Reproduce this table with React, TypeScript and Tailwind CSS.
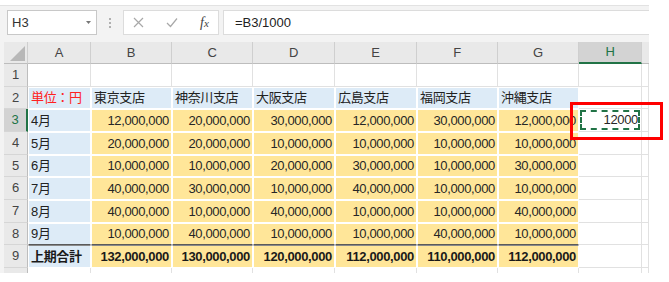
import React from "react";

const rows: [string, string[]][] = [
  ["4月", ["12,000,000", "20,000,000", "30,000,000", "12,000,000", "30,000,000", "12,000,000"]],
  ["5月", ["20,000,000", "20,000,000", "10,000,000", "10,000,000", "10,000,000", "10,000,000"]],
  ["6月", ["10,000,000", "10,000,000", "20,000,000", "30,000,000", "10,000,000", "30,000,000"]],
  ["7月", ["40,000,000", "30,000,000", "10,000,000", "40,000,000", "10,000,000", "10,000,000"]],
  ["8月", ["40,000,000", "10,000,000", "40,000,000", "10,000,000", "10,000,000", "40,000,000"]],
  ["9月", ["10,000,000", "40,000,000", "10,000,000", "10,000,000", "40,000,000", "10,000,000"]],
];
const totals = ["132,000,000", "130,000,000", "120,000,000", "112,000,000", "110,000,000", "112,000,000"];
const stores = ["東京支店", "神奈川支店", "大阪支店", "広島支店", "福岡支店", "沖縄支店"];
const letters = ["A", "B", "C", "D", "E", "F", "G"];

const empty = "bg-white border-b border-r border-[#e1e1e1]";
const emptyLast = "bg-white border-r border-[#e1e1e1]";
const rowHead =
  "flex items-center justify-center bg-[#e9e9e9] border-b border-r border-b-[#d6d6d6] border-r-[#bdbdbd] text-[#444] text-[13px]";

export default function App() {
  return (
    <div className="w-[669px] h-[282px] bg-white overflow-hidden relative font-['Liberation_Sans','Noto_Sans_CJK_JP',sans-serif] text-[13px] tracking-[-0.35px]">
      <div className="w-[649px] mt-[5px] bg-[#f3f3f3] border-t border-[#e2e2e2]">
        {/* formula bar */}
        <div className="h-[36px] pt-[4px] pl-[7px] flex items-start">
          <div className="w-[90px] h-[25px] bg-white border border-[#c8c8c8] flex items-center justify-between pl-[4px] pr-[5px]">
            <span className="text-[#333] tracking-normal">H3</span>
            <svg width="5" height="3" viewBox="0 0 5 3">
              <path d="M0 0H5L2.5 3Z" fill="#777" />
            </svg>
          </div>
          <div className="w-[26px] h-[25px] flex items-center justify-center">
            <div className="flex flex-col gap-[2px]">
              <div className="w-[2px] h-[2px] bg-[#b0b0b0]" />
              <div className="w-[2px] h-[2px] bg-[#b0b0b0]" />
              <div className="w-[2px] h-[2px] bg-[#b0b0b0]" />
            </div>
          </div>
          <div className="w-[96px] h-[25px] bg-white border border-[#dcdcdc] flex items-center pl-[9px] gap-[22px]">
            <svg width="11" height="11" viewBox="0 0 11 11">
              <path d="M1 1L10 10M10 1L1 10" stroke="#a8a8a8" strokeWidth="1.2" />
            </svg>
            <svg width="12" height="11" viewBox="0 0 12 11">
              <path d="M1 6L4.5 9.5L11 1.5" stroke="#a8a8a8" strokeWidth="1.2" fill="none" />
            </svg>
            <span className="italic font-['Liberation_Serif',serif] text-[14px] text-[#444] tracking-normal leading-none">
              f<span className="text-[11px]">x</span>
            </span>
          </div>
          <div className="ml-[4px] flex-1 h-[25px] bg-white border border-[#dcdcdc] border-r-0 flex items-center pl-[11px] text-[#222] tracking-normal">
            =B3/1000
          </div>
        </div>

        {/* sheet */}
        <div className="pl-[4px] grid grid-cols-[24px_63px_81px_81px_82px_82px_81px_81px_63px_7px] grid-rows-[22px_23px_22px_23px_23px_22px_23px_23px_22px_23px_5px]">
          {/* header row */}
          <div className="flex items-end justify-end pr-[2px] pb-[2px] bg-[#e9e9e9] border-b border-r border-b-[#bdbdbd] border-r-[#cfcfcf]">
            <svg width="15" height="15" viewBox="0 0 15 15">
              <polygon points="15,0 15,15 0,15" fill="#b8b8b8" />
            </svg>
          </div>
          {letters.map((l) => (
            <div
              key={l}
              className="flex items-center justify-center bg-[#e9e9e9] border-b border-r border-b-[#bdbdbd] border-r-[#cfcfcf] text-[#444]"
            >
              {l}
            </div>
          ))}
          <div className="flex items-center justify-center bg-[#d3d3d3] border-b-2 border-r border-b-[#217346] border-r-[#cfcfcf] text-[#217346]">
            H
          </div>
          <div className="bg-[#e9e9e9] border-b border-b-[#bdbdbd]" />

          {/* row 1 */}
          <div className={rowHead}>1</div>
          {Array.from({ length: 9 }).map((_, i) => (
            <div key={i} className={empty} />
          ))}

          {/* row 2 */}
          <div className={rowHead}>2</div>
          <div className="bg-[#ddebf7] border border-white flex items-center pl-[2px] text-[#ff2020] whitespace-nowrap">
            単位：円
          </div>
          {stores.map((s) => (
            <div
              key={s}
              className="bg-[#ddebf7] border border-white flex items-center pl-[2px] text-[#222] whitespace-nowrap"
            >
              {s}
            </div>
          ))}
          <div className={empty} />
          <div className={empty} />

          {/* rows 3-8 */}
          {rows.map(([m, vals], ri) => {
            const last = ri === rows.length - 1;
            const dark = last ? " border-b-[#5a5a5a]" : "";
            return (
              <React.Fragment key={m}>
                {ri === 0 ? (
                  <div className="flex items-center justify-center bg-[#d3d3d3] border-b border-r-2 border-b-[#d6d6d6] border-r-[#217346] text-[#217346]">
                    3
                  </div>
                ) : (
                  <div className={rowHead}>{ri + 3}</div>
                )}
                <div className={"bg-[#ddebf7] border border-white flex items-center pl-[2px] text-[#222] whitespace-nowrap" + dark}>
                  {m}
                </div>
                {vals.map((v, ci) => (
                  <div
                    key={ci}
                    className={"bg-[#ffe699] border border-white flex items-center justify-end pr-[2px] text-[#262626] whitespace-nowrap" + dark}
                  >
                    {v}
                  </div>
                ))}
                {ri === 0 ? (
                  <div className="bg-white border-b border-r border-[#e1e1e1] p-[1px]">
                    <div className="w-full h-full border-2 border-dashed border-[#217346] flex items-center justify-end text-[#262626]">
                      12000
                    </div>
                  </div>
                ) : (
                  <div className={empty} />
                )}
                <div className={empty} />
              </React.Fragment>
            );
          })}

          {/* row 9 */}
          <div className={rowHead}>9</div>
          <div className="bg-[#ddebf7] border border-white border-t-[#8a8a8a] flex items-center pl-[2px] font-bold text-[#1a1a1a] whitespace-nowrap">
            上期合計
          </div>
          {totals.map((v, ci) => (
            <div
              key={ci}
              className="bg-[#ffe699] border border-white border-t-[#8a8a8a] flex items-center justify-end pr-[2px] font-bold text-[#1a1a1a] whitespace-nowrap"
            >
              {v}
            </div>
          ))}
          <div className={empty} />
          <div className={empty} />

          {/* row 10 partial */}
          <div className="bg-[#e9e9e9] border-r border-[#bdbdbd]" />
          {Array.from({ length: 9 }).map((_, i) => (
            <div key={i} className={emptyLast} />
          ))}
        </div>
      </div>

      {/* red highlight box */}
      <div className="absolute left-[570px] top-[102px] w-[93px] h-[38px] border-[3px] border-[#ff0000]" />
    </div>
  );
}
